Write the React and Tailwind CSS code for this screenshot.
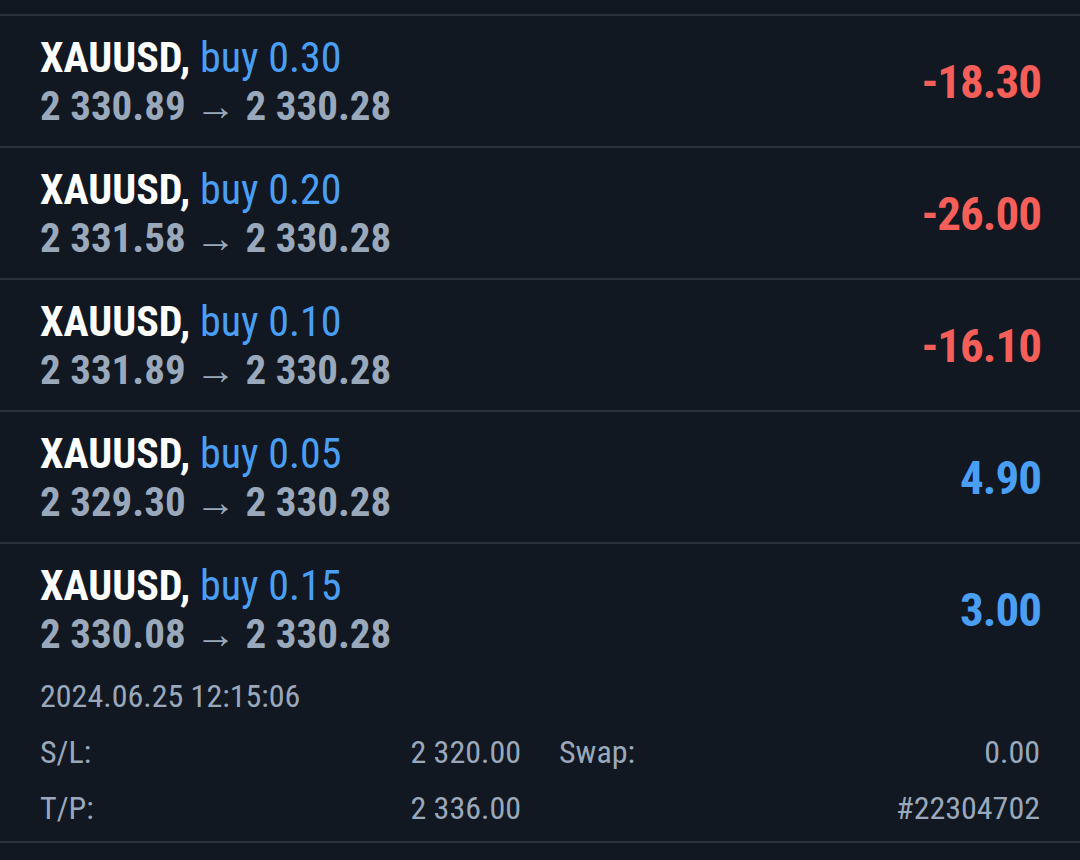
import React from "react";

const rows = [
  { lot: "0.30", open: "2 330.89", profit: "-18.30", neg: true },
  { lot: "0.20", open: "2 331.58", profit: "-26.00", neg: true },
  { lot: "0.10", open: "2 331.89", profit: "-16.10", neg: true },
  { lot: "0.05", open: "2 329.30", profit: "4.90", neg: false },
  { lot: "0.15", open: "2 330.08", profit: "3.00", neg: false, expanded: true },
];

function Divider() {
  return <div className="h-[2px] bg-[#2c313b]" />;
}

function Row({ r }) {
  return (
    <div className="px-10">
      <div className="flex h-[130px] items-center justify-between pt-[2px]">
        <div className="flex flex-col">
          <div className="text-[42px] leading-[48px] whitespace-nowrap">
            <span className="font-bold text-white">XAUUSD,</span>{" "}
            <span className="text-[#4a9ff5]">buy {r.lot}</span>
          </div>
          <div className="text-[41px] leading-[48px] font-bold text-[#9aa8bb] whitespace-nowrap">
            {r.open}{" "}
            <span className="font-normal leading-none">→</span> 2 330.28
          </div>
        </div>
        <div
          className={
            "text-[47px] leading-[56px] font-bold tracking-[-1px] mr-[-1px] " +
            (r.neg ? "text-[#f65f59]" : "text-[#4a9ff5]")
          }
        >
          {r.profit}
        </div>
      </div>
      {r.expanded && (
        <div className="-mt-[6px] pb-[5px] text-[32px] leading-[56px] text-[#9aa8bb]">
          <div>2024.06.25 12:15:06</div>
          <div className="grid grid-cols-2 gap-x-[38px]">
            <div className="flex justify-between">
              <span>S/L:</span>
              <span>2 320.00</span>
            </div>
            <div className="flex justify-between">
              <span>Swap:</span>
              <span>0.00</span>
            </div>
            <div className="flex justify-between">
              <span>T/P:</span>
              <span>2 336.00</span>
            </div>
            <div className="flex justify-end">
              <span>#22304702</span>
            </div>
          </div>
        </div>
      )}
    </div>
  );
}

export default function App() {
  return (
    <div
      className="w-[1080px] h-[860px] overflow-hidden bg-[#111821] pt-[14px] [font-stretch:condensed]"
      style={{ fontFamily: '"Roboto Condensed", Roboto, "Liberation Sans", sans-serif' }}
    >
      {rows.map((r, i) => (
        <div key={i}>
          <Divider />
          <Row r={r} />
        </div>
      ))}
      <Divider />
    </div>
  );
}
